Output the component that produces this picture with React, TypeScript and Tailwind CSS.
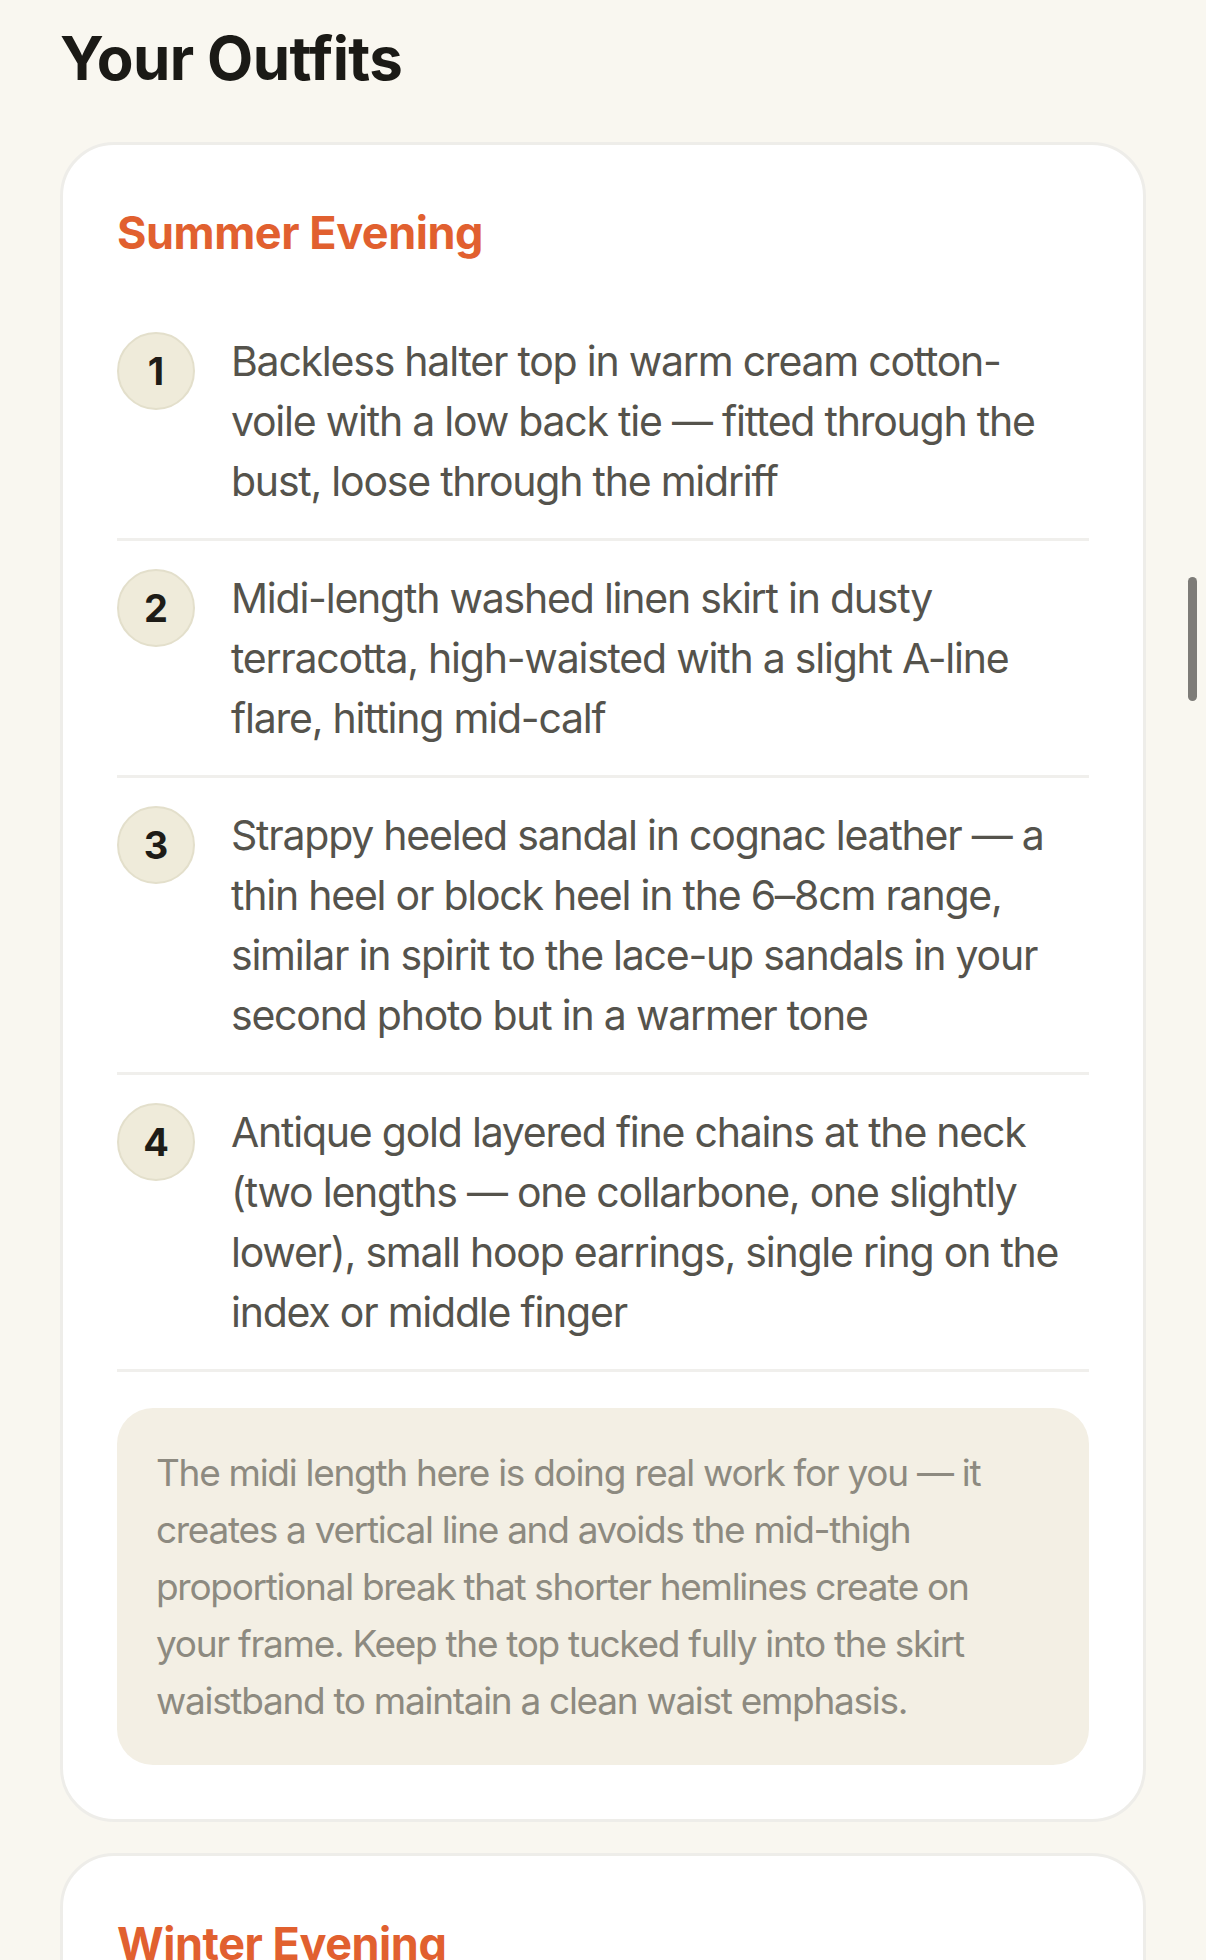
const outfits = [
  {
    title: 'Summer Evening',
    items: [
      'Backless halter top in warm cream cotton-voile with a low back tie — fitted through the bust, loose through the midriff',
      'Midi-length washed linen skirt in dusty terracotta, high-waisted with a slight A-line flare, hitting mid-calf',
      'Strappy heeled sandal in cognac leather — a thin heel or block heel in the 6–8cm range, similar in spirit to the lace-up sandals in your second photo but in a warmer tone',
      'Antique gold layered fine chains at the neck (two lengths — one collarbone, one slightly lower), small hoop earrings, single ring on the index or middle finger',
    ],
    note: 'The midi length here is doing real work for you — it creates a vertical line and avoids the mid-thigh proportional break that shorter hemlines create on your frame. Keep the top tucked fully into the skirt waistband to maintain a clean waist emphasis.',
  },
  {
    title: 'Winter Evening',
    items: [],
    note: '',
  },
];

export default function App() {
  return (
    <div className="relative h-screen overflow-hidden bg-[#F9F7F0] font-['Inter',sans-serif]">
      <div className="px-[60px] pt-[22px]">
        <h1 className="mb-[48px] text-[60px] font-bold leading-[72px] tracking-[-0.01em] text-[#1B1A16]">
          Your Outfits
        </h1>

        <div className="flex flex-col gap-[31px]">
          {outfits.map((outfit) => (
            <div
              key={outfit.title}
              className="rounded-[54px] border-[3px] border-[#EEEDE9] bg-white p-[54px]"
            >
              <h2 className="mb-[37px] text-[45px] font-bold leading-[68px] tracking-[-0.01em] text-[#E1602F]">
                {outfit.title}
              </h2>

              {outfit.items.length > 0 && (
                <ul>
                  {outfit.items.map((item, i) => (
                    <li
                      key={i}
                      className="flex items-start gap-9 border-b-[3px] border-[#F0EFEC] py-[27px]"
                    >
                      <span className="mt-[1px] flex h-[78px] w-[78px] shrink-0 items-center justify-center rounded-full border-2 border-[#E3DFCB] bg-[#EFEBDA] text-[38px] font-bold text-[#1E1C17]">
                        {i + 1}
                      </span>
                      <p className="flex-1 pr-[22px] text-[41px] leading-[60px] tracking-[-0.03em] text-[#55534C]">
                        {item}
                      </p>
                    </li>
                  ))}
                </ul>
              )}

              {outfit.note && (
                <p className="mt-9 rounded-[36px] bg-[#F3EFE4] px-[39px] py-9 text-[37px] leading-[57px] tracking-[-0.035em] text-[#8D8A80]">
                  {outfit.note}
                </p>
              )}
            </div>
          ))}
        </div>
      </div>

      {/* scroll indicator */}
      <div className="absolute right-[9px] top-[577px] h-[124px] w-[9px] rounded-full bg-[#7E7C78]" />
    </div>
  );
}
